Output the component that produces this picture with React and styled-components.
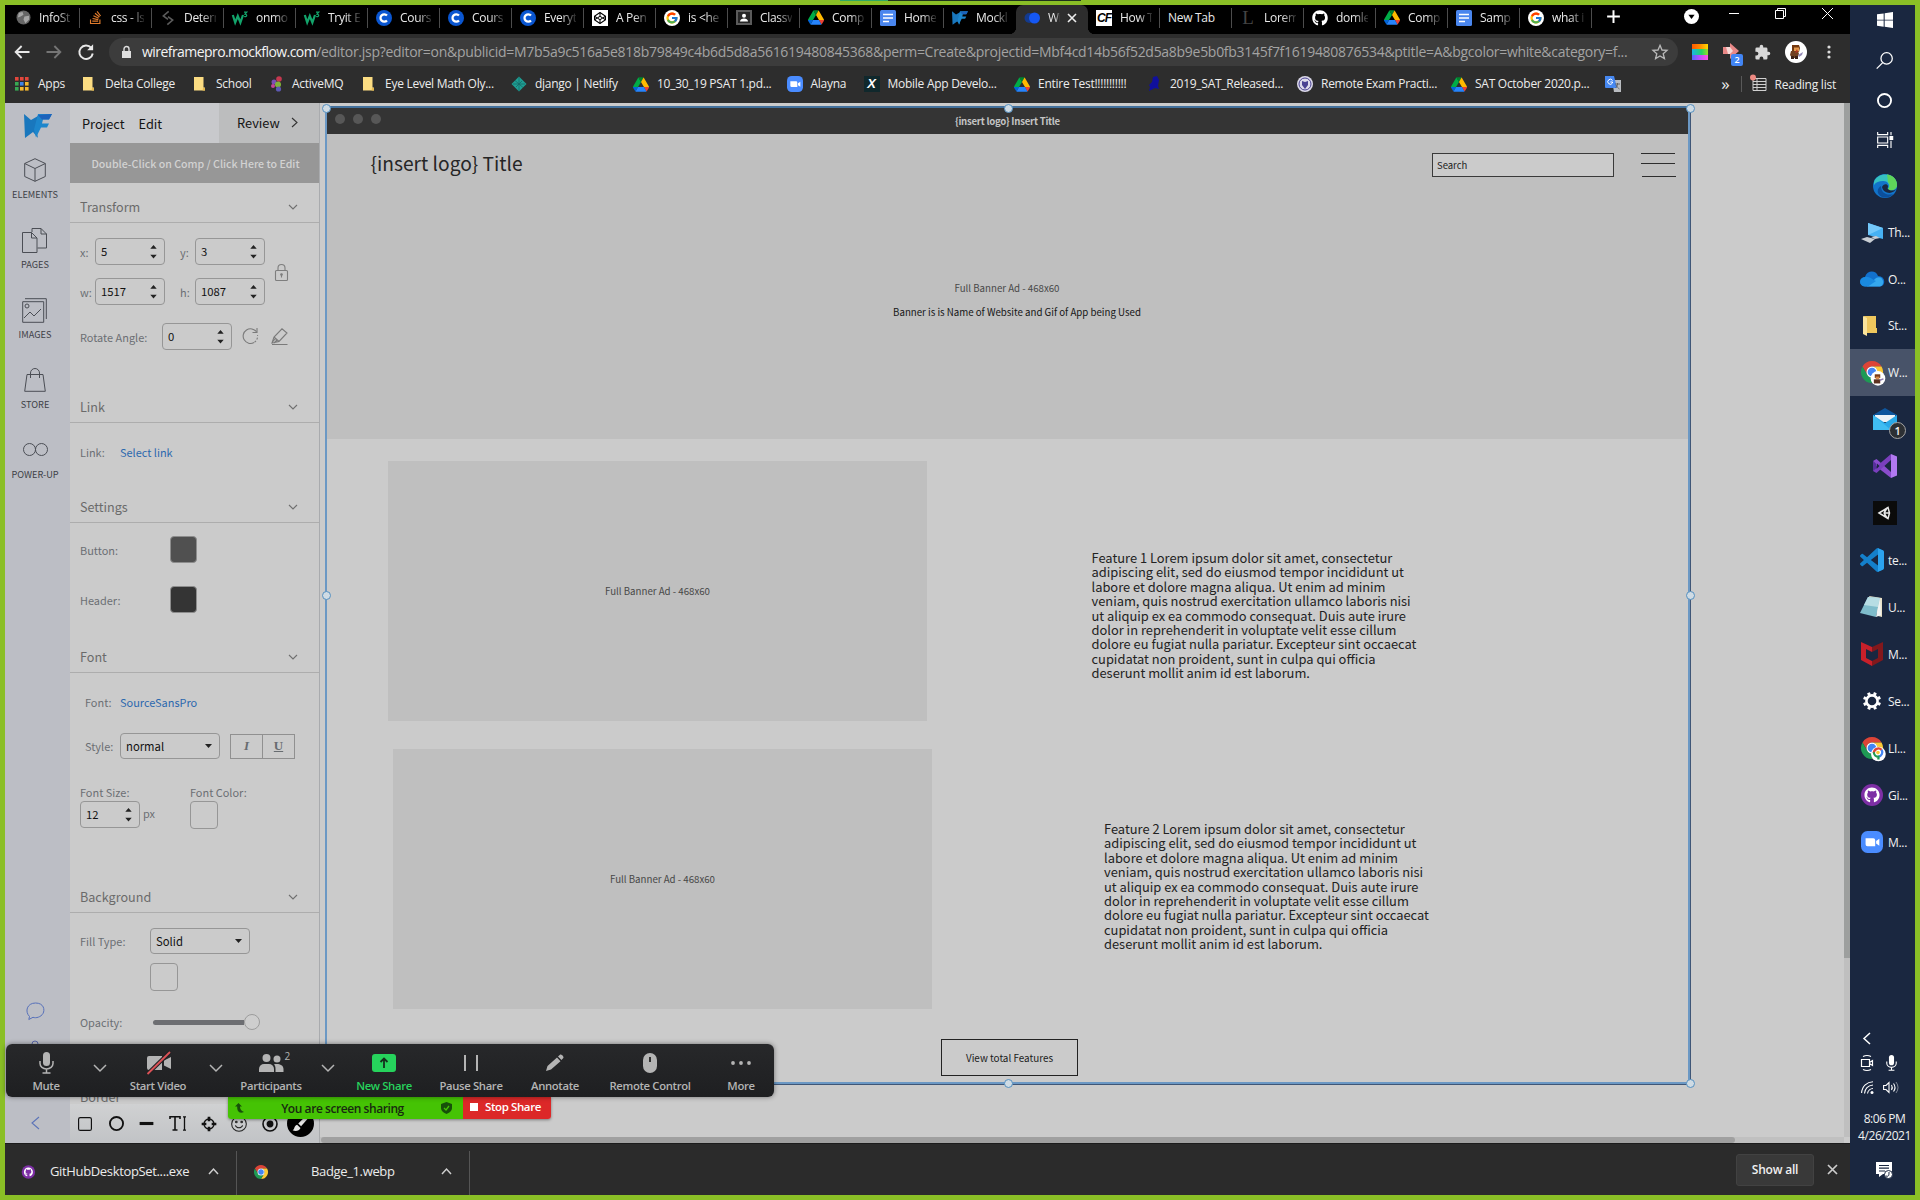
import React from "react";
import styled, { createGlobalStyle, css } from "styled-components";
import { FcGoogle } from "react-icons/fc";
import { FaGithub, FaCodepen, FaStackOverflow } from "react-icons/fa";

const ui = `"Open Sans", "Noto Sans", sans-serif`;
const source = `"Noto Sans CJK SC", "Noto Sans", sans-serif`;

const Global = createGlobalStyle`
  * { box-sizing: border-box; }
  body { margin: 0; background: #8abf26; overflow: hidden; font-family: ${ui}; }
  svg { display: block; flex: none; overflow: visible; }
`;

/* ---------- frame ---------- */
const Screen = styled.div`
  position: relative;
  width: 1920px;
  height: 1200px;
  padding: 5px;
  display: flex;
  background: #8abf26;
`;
const TopMarker = styled.div`
  position: absolute;
  top: 0;
  left: 840px;
  width: 241px;
  height: 1px;
  background: linear-gradient(90deg, #2fa866 48px, #20321c 48px);
`;
const Browser = styled.div`
  width: 1845px;
  height: 1190px;
  display: flex;
  flex-direction: column;
`;

/* ---------- tabs ---------- */
const TabStrip = styled.div`
  height: 29px;
  display: flex;
  background: #000;
  padding-left: 3px;
`;
const Tab = styled.div`
  position: relative;
  width: 72px;
  height: 29px;
  padding: 0 8px 4px 8px;
  display: flex;
  align-items: center;
  gap: 8px;
  ${(p) => p.$line && css`
    background: linear-gradient(#4c4c4c, #4c4c4c) 71px 3px / 1px 20px no-repeat;
  `}
  ${(p) => p.$active && css`
    background: #2d2d2d;
    border-radius: 7px 7px 0 0;
    &::before, &::after {
      content: "";
      position: absolute;
      bottom: 0;
      width: 7px;
      height: 7px;
    }
    &::before { left: -7px; background: radial-gradient(circle at 0 0, transparent 7px, #2d2d2d 7.5px); }
    &::after { right: -7px; background: radial-gradient(circle at 100% 0, transparent 7px, #2d2d2d 7.5px); }
  `}
`;
const TabTitle = styled.span`
  flex: ${(p) => (p.$w ? "none" : 1)};
  width: ${(p) => (p.$w ? p.$w + "px" : "auto")};
  overflow: hidden;
  white-space: nowrap;
  font-size: 12px;
  line-height: 18px;
  letter-spacing: -0.3px;
  color: #e9e9e9;
  ${(p) => !p.$full && css`mask-image: linear-gradient(90deg, #000 55%, rgba(0, 0, 0, 0.15) 100%);`}
`;
const WindowControls = styled.div`
  flex: 1;
  display: flex;
  align-items: flex-start;
  justify-content: space-between;
  padding: 3px 17px 0 13px;
`;
const ControlGroup = styled.div`
  display: flex;
  gap: ${(p) => p.$gap}px;
  align-items: center;
`;

/* ---------- address bar ---------- */
const AddressBar = styled.div`
  height: 36px;
  display: flex;
  align-items: center;
  background: #2d2d2d;
  padding-left: 8px;
`;
const NavButtons = styled.div`
  width: 96px;
  display: flex;
  gap: 14px;
`;
const UrlPill = styled.div`
  width: 1569px;
  height: 28px;
  border-radius: 14px;
  background: #3c3c3c;
  display: flex;
  align-items: center;
  justify-content: space-between;
  padding: 0 10px 0 9px;
`;
const UrlText = styled.div`
  display: flex;
  align-items: center;
  width: 1525px;
  white-space: nowrap;
  font-size: 14px;
  line-height: 20px;
  color: #a3a3a3;
`;
const LockSlot = styled.span`
  flex: none;
  width: 24px;
`;
const Host = styled.span`
  flex: none;
  color: #f4f4f4;
  letter-spacing: -0.56px;
`;
const UrlPath = styled.span`
  flex: none;
  letter-spacing: -0.285px;
`;
const Extensions = styled.div`
  display: flex;
  align-items: center;
  padding-left: 14px;
  gap: 14px;
`;
const Rainbow = styled.div`
  width: 16px;
  height: 16px;
  background:
    linear-gradient(90deg, #ff5a00, #ff8a00, #ffd800) 0 0 / 16px 5px no-repeat,
    linear-gradient(90deg, #19b5e8, #25d366 60%, #9bdb2a) 0 5px / 16px 6px no-repeat,
    linear-gradient(90deg, #4c6bff, #c04cff, #ff56e0) 0 11px / 16px 5px no-repeat;
`;
const ExtArrow = styled.div`
  position: relative;
  width: 18px;
  height: 18px;
`;
const ExtBadge = styled.span`
  position: absolute;
  left: 9px;
  top: 11px;
  width: 12px;
  height: 12px;
  border-radius: 2px;
  background: #4285f4;
  color: #fff;
  font-size: 9px;
  font-weight: 600;
  line-height: 12px;
  text-align: center;
`;

/* ---------- bookmarks ---------- */
const BookmarkBar = styled.div`
  height: 33px;
  display: flex;
  align-items: center;
  background: #2d2d2d;
  padding: 0 14px 5px 9px;
`;
const Bookmark = styled.div`
  width: ${(p) => p.$w}px;
  display: flex;
  align-items: center;
  gap: 8px;
  white-space: nowrap;
  font-size: 12px;
  line-height: 18px;
  letter-spacing: -0.27px;
  color: #ececec;
`;
const BookmarkEnd = styled.div`
  margin-left: auto;
  display: flex;
  align-items: center;
  gap: 8px;
  font-size: 12px;
  letter-spacing: -0.23px;
  color: #ececec;
`;
const EndLine = styled.i`
  width: 1px;
  height: 16px;
  margin: 0 1px 0 3px;
  background: #595959;
`;
const More = styled.span`
  font-size: 17px;
  line-height: 16px;
`;

/* ---------- editor ---------- */
const Editor = styled.div`
  height: 1040px;
  display: flex;
  background: #cbcbcb;
  overflow: hidden;
`;
const Rail = styled.div`
  width: 65px;
  display: flex;
  flex-direction: column;
  align-items: center;
  padding: 11px 5px 0 0;
  background: #bcbec5;
`;
const RailLogo = styled.div`
  height: 44px;
  flex: none;
  padding-left: 5px;
`;
const RailItem = styled.div`
  height: 70px;
  flex: none;
  display: flex;
  flex-direction: column;
  align-items: center;
  justify-content: space-between;
  padding-bottom: 27px;
  font-family: ${source};
  font-size: 9.2px;
  line-height: 14px;
  color: #3e4147;
  white-space: nowrap;
`;
const RailFoot = styled.div`
  margin-top: auto;
  height: 141px;
  flex: none;
  display: flex;
  flex-direction: column;
  justify-content: space-between;
  align-items: center;
  padding-bottom: 14px;
`;
const FootIcons = styled.div`
  display: flex;
  flex-direction: column;
  align-items: center;
  gap: 19px;
`;
const Panel = styled.div`
  width: 250px;
  display: flex;
  flex-direction: column;
  border-right: 1px solid #a9abae;
  font-family: ${source};
`;
const MenuRow = styled.div`
  height: 40px;
  flex: none;
  display: flex;
  background: #c8c9cc;
  font-size: 12.8px;
  color: #141414;
`;
const MenuItems = styled.div`
  width: 149px;
  padding-left: 12px;
  display: flex;
  align-items: center;
  gap: 14px;
`;
const Review = styled.div`
  flex: 1;
  display: flex;
  align-items: center;
  gap: 12px;
  padding: 0 0 1px 18px;
  background: #bcbdbe;
`;
const EditHint = styled.div`
  height: 40px;
  flex: none;
  display: flex;
  align-items: center;
  justify-content: center;
  padding-left: 2px;
  background: #979797;
  color: #d2d2d2;
  font-size: 10.6px;
  font-weight: 500;
  white-space: nowrap;
`;
const Section = styled.section`
  height: ${(p) => p.$h}px;
  flex: none;
  overflow: hidden;
`;
const SectionHead = styled.div`
  height: 40px;
  display: flex;
  align-items: center;
  justify-content: space-between;
  padding: 8px 22px 0 10px;
  border-bottom: 1px solid #adadad;
  color: #6a6a6a;
  font-size: 12.6px;
`;
const Row = styled.div`
  display: flex;
  align-items: ${(p) => p.$align || "center"};
  height: ${(p) => p.$h}px;
  margin-top: ${(p) => p.$mt || 0}px;
  padding-left: ${(p) => p.$pl ?? 10}px;
`;
const Label = styled.span`
  width: ${(p) => (p.$w ? p.$w + "px" : "auto")};
  flex: none;
  font-size: 10.95px;
  line-height: 16px;
  color: ${(p) => (p.$link ? "#2c68ae" : "#6b6f74")};
  white-space: nowrap;
`;
const Field = styled.div`
  width: ${(p) => p.$w}px;
  height: ${(p) => p.$h || 27}px;
  flex: none;
  display: flex;
  align-items: center;
  justify-content: space-between;
  padding: 0 7px 1px 5px;
  margin-right: ${(p) => p.$mr || 0}px;
  border: 1px solid #969696;
  border-radius: 4px;
  font-size: 11.3px;
  color: #111;
`;
const Swatch = styled.div`
  width: ${(p) => p.$s || 28}px;
  height: ${(p) => p.$s || 28}px;
  flex: none;
  border: 1px solid ${(p) => (p.$c ? "#8d8d8d" : "#969696")};
  border-radius: 4px;
  background: ${(p) => p.$c || "transparent"};
`;
const StyleButtons = styled.div`
  display: flex;
  margin-left: 10px;
  width: 65px;
  height: 25px;
  border: 1px solid #909090;
  font-family: "Liberation Serif", serif;
  font-weight: bold;
  font-size: 13px;
  color: #676c70;
`;
const StyleButton = styled.span`
  flex: 1;
  display: flex;
  align-items: center;
  justify-content: center;
  font-style: ${(p) => (p.$italic ? "italic" : "normal")};
  text-decoration: ${(p) => (p.$italic ? "none" : "underline")};
  & + & { border-left: 1px solid #909090; }
`;
const Column = styled.div`
  width: ${(p) => p.$w}px;
  display: flex;
  flex-direction: column;
  gap: 1px;
`;
const PxRow = styled.div`
  display: flex;
  gap: 3px;
  align-items: center;
`;
const PxUnit = styled(Label)`
  padding-bottom: 3px;
`;
const LockRaise = styled.span`
  align-self: flex-start;
  margin-top: -14px;
`;
const EraserSlot = styled.span`
  margin-left: 12px;
`;
const Slider = styled.div`
  display: flex;
  align-items: center;
  height: 16px;
`;
const Track = styled.i`
  width: 91px;
  height: 5px;
  border-radius: 3px 0 0 3px;
  background: #6d6e72;
`;
const Knob = styled.i`
  width: 16px;
  height: 16px;
  border-radius: 50%;
  border: 1px solid #9c9c9c;
  background: #cecece;
`;
const ShapeBar = styled.div`
  height: 39px;
  flex: none;
  display: flex;
  align-items: center;
  background: linear-gradient(#d0d1d2, #c1c3c6);
`;
const ShapeSlot = styled.div`
  width: 30.8px;
  flex: none;
  display: flex;
  justify-content: center;
`;

/* ---------- canvas ---------- */
const Workspace = styled.div`
  flex: 1;
  display: grid;
  grid-template-columns: 1fr 6px;
  grid-template-rows: 1fr 6px;
`;
const VScroll = styled.div`
  background: linear-gradient(#9d9f9e, #9d9f9e) 0 0 / 6px 855px no-repeat, #bfbfbf;
`;
const HScroll = styled.div`
  background: #c0c0c0;
  &::before {
    content: "";
    display: block;
    width: 1414px;
    margin-left: 1px;
    height: 6px;
    border-radius: 3px;
    background: #a0a0a0;
  }
`;
const Canvas = styled.div`
  position: relative;
  font-family: ${source};
`;
const Mock = styled.div`
  position: absolute;
  left: 5px;
  top: 3px;
  width: 1365px;
  height: 978px;
  border: 2px solid #6b98c4;
  border-top-color: #42709c;
  box-shadow: 1px 1px 0 #3f5677;
`;
const MockTitleBar = styled.div`
  height: 26px;
  display: flex;
  align-items: center;
  background: #343434;
`;
const MockDots = styled.div`
  width: 60px;
  display: flex;
  gap: 8px;
  padding: 0 0 4px 8px;
`;
const MockDot = styled.i`
  width: 10px;
  height: 10px;
  border-radius: 50%;
  background: #575757;
`;
const MockTitle = styled.div`
  flex: 1;
  text-align: center;
  padding: 0 60px 1px 0;
  font-size: 9.6px;
  line-height: 14px;
  font-weight: 700;
  letter-spacing: -0.25px;
  color: #c4c4c4;
`;
const MockHero = styled.div`
  height: 305px;
  background: #bfbfbf;
`;
const Placed = styled.div`
  position: absolute;
  left: ${(p) => p.$x}px;
  top: ${(p) => p.$y}px;
  width: ${(p) => (p.$w ? p.$w + "px" : "auto")};
  height: ${(p) => (p.$h ? p.$h + "px" : "auto")};
  white-space: nowrap;
`;
const Banner = styled(Placed)`
  display: flex;
  align-items: center;
  justify-content: center;
  background: #bfbfbf;
  font-size: 9.7px;
  color: #484848;
`;
const Caption = styled(Placed)`
  text-align: center;
  font-size: 9.7px;
  line-height: 14px;
  color: ${(p) => p.$c || "#484848"};
`;
const BrandTitle = styled(Placed)`
  font-size: 19.2px;
  line-height: 28px;
  color: #262626;
`;
const SearchBox = styled(Placed)`
  border: 1.5px solid #3a3a3a;
  background: #cbcbcb;
  padding: 0 0 0 4px;
  font-size: 9.5px;
  line-height: 22px;
  color: #222;
`;
const MenuLine = styled(Placed)`
  background: #2d2d2d;
`;
const Feature = styled(Placed)`
  font-size: 12.88px;
  line-height: 14.4px;
  color: #222;
`;
const ViewButton = styled(Placed)`
  display: flex;
  align-items: center;
  justify-content: center;
  border: 1px solid #222;
  font-size: 9.9px;
  color: #1c1c1c;
`;
const Handle = styled(Placed)`
  width: 9px;
  height: 9px;
  margin: -4.5px 0 0 -4.5px;
  border-radius: 50%;
  border: 1.5px solid #5590c0;
  background: #cfdbe4;
`;

/* ---------- downloads ---------- */
const Downloads = styled.div`
  height: 52px;
  display: flex;
  align-items: center;
  background: #2b2b2b;
  border-top: 1px solid #1c1c1c;
`;
const Download = styled.div`
  width: ${(p) => p.$w}px;
  height: 44px;
  margin-top: 6px;
  padding: 0 18px 2px 17px;
  display: flex;
  align-items: center;
  border-right: 1px solid #555;
  color: #ececec;
  font-size: 13px;
  letter-spacing: -0.35px;
  white-space: nowrap;
`;
const FileName = styled.span`
  flex: 1;
  padding: 0 0 2px ${(p) => p.$pl}px;
`;
const ShowAll = styled.div`
  width: 78px;
  height: 32px;
  margin: 1px 0 0 auto;
  border-radius: 3px;
  border: 1px solid #424242;
  background: #393939;
  color: #f0f0f0;
  font-size: 12px;
  font-weight: 600;
  line-height: 30px;
  text-align: center;
  letter-spacing: -0.2px;
`;
const CloseSlot = styled.div`
  width: 36px;
  display: flex;
  justify-content: center;
`;

/* ---------- meeting controls ---------- */
const Meeting = styled.div`
  position: absolute;
  left: 6px;
  top: 1044px;
  width: 768px;
  height: 53px;
  border-radius: 6px;
  background: linear-gradient(#27282a, #1e1f21);
  box-shadow: 0 0 5px rgba(0, 0, 0, 0.45);
  display: grid;
  grid-template-columns: 80px 28px 88px 28px 82px 32px 80px 94px 74px 116px 66px;
`;
const Action = styled.div`
  display: flex;
  flex-direction: column;
  align-items: center;
  justify-content: space-between;
  padding: 7px 0 3px;
  font-size: 11.3px;
  line-height: 17px;
  font-weight: 600;
  letter-spacing: -0.35px;
  white-space: nowrap;
  color: ${(p) => (p.$green ? "#26d35c" : "#b4b4b4")};
`;
const Caret = styled.div`
  display: flex;
  justify-content: center;
  padding-top: 21px;
`;
const ActionIcon = styled.div`
  height: 23px;
  display: flex;
  align-items: center;
  position: relative;
`;
const Count = styled.span`
  position: absolute;
  left: 26px;
  top: -3px;
  font-size: 10px;
  font-weight: 400;
`;
const ShareBar = styled.div`
  position: absolute;
  left: 228px;
  top: 1097px;
  width: 323px;
  height: 22px;
  display: flex;
  font-size: 12px;
  box-shadow: 0 1px 3px rgba(0, 0, 0, 0.4);
  border-radius: 0 0 3px 3px;
  overflow: hidden;
`;
const Sharing = styled.div`
  width: 235px;
  display: flex;
  align-items: center;
  justify-content: space-between;
  padding: 0 11px 0 7px;
  background: #45c304;
  color: #182a10;
  font-weight: 600;
  letter-spacing: -0.43px;
`;
const StopShare = styled.div`
  flex: 1;
  display: flex;
  align-items: center;
  gap: 7px;
  padding: 0 0 3px 7px;
  background: #dc2828;
  color: #fff;
  font-weight: 600;
  font-size: 11.5px;
  letter-spacing: -0.4px;
  white-space: nowrap;
  i { width: 8px; height: 8px; background: #fff; }
`;

/* ---------- taskbar ---------- */
const Taskbar = styled.div`
  width: 65px;
  height: 1190px;
  display: flex;
  flex-direction: column;
  background: #1a2740;
  color: #f1f1f1;
`;
const SysIcon = styled.div`
  height: 40px;
  display: flex;
  align-items: center;
  justify-content: center;
  padding: 0 0 10px 4px;
`;
const TaskList = styled.div`
  display: flex;
  flex-direction: column;
  margin-top: -2px;
`;
const TaskItem = styled.div`
  position: relative;
  height: 47px;
  &:nth-child(-n + 5) { height: 46.5px; }
  display: flex;
  align-items: center;
  padding-left: ${(p) => (p.$solo ? 23 : p.$inset ? 11 : 10)}px;
  background: ${(p) => (p.$active ? "#485369" : "transparent")};
  font-size: 12px;
  letter-spacing: -0.3px;
  white-space: nowrap;
`;
const TaskText = styled.span`
  position: absolute;
  left: 38px;
`;
const MailCount = styled.span`
  position: absolute;
  left: 39px;
  top: 26px;
  width: 17px;
  height: 17px;
  border-radius: 50%;
  border: 1px solid #a4a4a4;
  background: #2c2f33;
  font-size: 11px;
  font-weight: 600;
  line-height: 15px;
  text-align: center;
`;
const Tray = styled.div`
  margin-top: auto;
  display: grid;
  grid-template-columns: 24px 24px;
  padding-left: 5px;
  height: 74px;
  grid-template-rows: 24px 25px 25px;
  place-items: center;
`;
const Clock = styled.div`
  padding: 10px 0 0 4px;
  height: 62px;
  text-align: center;
  font-size: 12px;
  line-height: 17px;
  letter-spacing: -0.45px;
`;
const Notify = styled.div`
  height: 33px;
  display: flex;
  justify-content: center;
  padding-left: 4px;
`;

/* ---------- drawings ---------- */
const Svg = ({ s = 16, children, v = 24, sw = 1.5, c = "currentColor", fill = "none" }) => (
  <svg width={s} height={s} viewBox={`0 0 ${v} ${v}`} fill={fill} stroke={fill === "none" ? c : "none"} strokeWidth={sw}>
    {children}
  </svg>
);
const Drive = () => (
  <svg width="16" height="15" viewBox="0 0 87.3 78">
    <path d="m6.6 66.85 3.85 6.65c.8 1.4 1.95 2.5 3.3 3.3l13.75-23.8h-27.5c0 1.55.4 3.1 1.2 4.5z" fill="#0066da" />
    <path d="m43.65 25-13.75-23.8c-1.35.8-2.5 1.9-3.3 3.3l-25.4 44a9.06 9.06 0 0 0 -1.2 4.5h27.5z" fill="#00ac47" />
    <path d="m73.55 76.8c1.35-.8 2.5-1.9 3.3-3.3l1.6-2.75 7.65-13.25c.8-1.4 1.2-2.95 1.2-4.5h-27.502l5.852 11.5z" fill="#ea4335" />
    <path d="m43.65 25 13.75-23.8c-1.35-.8-2.9-1.2-4.5-1.2h-18.5c-1.6 0-3.15.45-4.5 1.2z" fill="#00832d" />
    <path d="m59.8 53h-32.3l-13.75 23.8c1.35.8 2.9 1.2 4.5 1.2h50.8c1.6 0 3.15-.45 4.5-1.2z" fill="#2684fc" />
    <path d="m73.4 26.5-12.7-22c-.8-1.4-1.95-2.5-3.3-3.3l-13.75 23.8 16.15 28h27.45c0-1.55-.4-3.1-1.2-4.5z" fill="#ffba00" />
  </svg>
);
const Chrome = ({ s = 22, badge }) => (
  <svg width={s} height={s} viewBox="0 0 48 48">
    <path d="M24 12H44.8A24 24 0 0 0 3.2 12L13.6 30A12 12 0 0 1 24 12Z" fill="#dc4437" />
    <path d="M24 12H44.8A24 24 0 0 1 24 48L34.4 30A12 12 0 0 0 24 12Z" fill="#fcc934" />
    <path d="M13.6 30L3.2 12A24 24 0 0 0 24 48L34.4 30A12 12 0 0 1 13.6 30Z" fill="#1e9a54" />
    <circle cx="24" cy="24" r="12" fill="#fff" />
    <circle cx="24" cy="24" r="9.5" fill="#4285f4" />
    {badge === "face" && (
      <g>
        <circle cx="37" cy="38" r="16" fill="#fff" />
        <path d="M30 29h12v8H30z" fill="#7a3a16" />
        <path d="M32 34h8v6h-8z" fill="#d98b4d" />
        <path d="M28 40h14v9H28z" fill="#5d3220" />
        <path d="M41 42l8-3" stroke="#8c7bb0" strokeWidth="3" />
      </g>
    )}
    {badge === "p" && (
      <g>
        <circle cx="38" cy="37" r="16" fill="#fff" />
        <path d="M28 35A10 10 0 0 1 45 28" fill="none" stroke="#dc4437" strokeWidth="5" />
        <path d="M45 28A10 10 0 0 1 38 43" fill="none" stroke="#4285f4" strokeWidth="5" />
        <path d="M28 33A10 10 0 0 0 38 43V49" fill="none" stroke="#1e9a54" strokeWidth="5" />
        <circle cx="37" cy="34" r="4" fill="#fcc934" />
      </g>
    )}
  </svg>
);
const Coursera = () => (
  <Svg s={16} fill="#0a56d1">
    <circle cx="12" cy="12" r="12" />
    <path d="M16.5 8.2A5.6 5.6 0 1 0 16.5 15.8" fill="none" stroke="#fff" strokeWidth="3.4" />
  </Svg>
);
const W3 = () => (
  <svg width="16" height="14" viewBox="0 0 16 14" fill="none" stroke="#13a46b">
    <path d="M.8 4l2.4 7.5L5.8 5l2.6 6.500L11 4" strokeWidth="2.2" />
    <path d="M12 1.2h2.8L13 3.2c2.4 0 2.4 3-.9 2.3" strokeWidth="1.2" />
  </svg>
);
const MF = ({ w = 16, h = 14 }) => (
  <svg width={w} height={h} viewBox="0 0 28 24">
    <path d="M0 0l7 6 7-4 2 2-4 10 2 10-5-6-8 6z" fill="#1977bd" />
    <path d="M14 0h14l-3 5.500h-6l-1 4h7l-2 4h-6l-5 10-2-8z" fill="#1d86cc" />
    <path d="M14 1l14-1-3 5.500h-7z" fill="#1c62bb" />
  </svg>
);
const Docs = () => (
  <svg width="16" height="16" viewBox="0 0 16 16">
    <rect width="16" height="16" rx="1.5" fill="#4a86ee" />
    <path d="M3 4.500h10M3 8h10M3 11.500h6" stroke="#fff" strokeWidth="1.7" />
  </svg>
);
const Folder = () => (
  <svg width="16" height="16" viewBox="0 0 16 16">
    <path d="M2 1h9.500v10.500h1.500V14.500H2z" fill="#fbdc82" />
    <path d="M11 12l2 0v2.500h-2.500z" fill="#e4b94f" />
  </svg>
);
const Cam = ({ s = 16 }) => (
  <svg width={s} height={s} viewBox="0 0 24 24">
    <rect width="24" height="24" rx="7" fill="#4a8cff" />
    <path d="M5 8h8.500a2 2 0 0 1 2 2v6.500H7a2 2 0 0 1-2-2z M16.500 11l3.500-2.500v7.500l-3.500-2.300z" fill="#fff" />
  </svg>
);
const Globe = () => (
  <svg width="15" height="15" viewBox="0 0 16 16">
    <circle cx="8" cy="8" r="7.500" fill="#666" />
    <path d="M3 3l4-1 1 3-3 2-3 1zM9 7l5-1v4l-4 4-2-4z" fill="#c9c9c9" opacity=".65" />
  </svg>
);
const ClassIcon = () => (
  <svg width="16" height="15" viewBox="0 0 16 15">
    <rect width="16" height="15" fill="#5b5b5b" />
    <rect x="2" y="2" width="12" height="11" fill="#262626" />
    <circle cx="8" cy="5.700" r="2" fill="#fff" />
    <path d="M4 11.500c0-4 8-4 8 0z" fill="#fff" />
  </svg>
);
const GoogleDisc = () => (
  <Svg s={16} fill="#fff"><circle cx="12" cy="12" r="12" /><FcGoogle x={2} y={2} size={20} /></Svg>
);
const CF = styled.span`
  width: 16px;
  height: 16px;
  flex: none;
  background: #fff;
  color: #000;
  font: italic bold 12px/16px "Liberation Sans", sans-serif;
  letter-spacing: -1px;
  text-align: center;
`;
const LSerif = styled.span`
  width: 16px;
  flex: none;
  color: #444;
  font: 19px/18px "Liberation Serif", serif;
  text-align: center;
`;
const XIcon = styled.span`
  width: 16px;
  height: 16px;
  flex: none;
  background: #10282c;
  color: #fff;
  font: italic bold 13px/15px "Liberation Sans", sans-serif;
  text-align: center;
`;
const Avatar = () => (
  <svg width="22" height="22" viewBox="0 0 22 22">
    <circle cx="11" cy="11" r="11" fill="#fff" />
    <path d="M7 4h7l1 3-1 4H7z" fill="#74380f" />
    <path d="M9 6.500h5v4H9z" fill="#e59a4c" />
    <path d="M6 10h7l1 3-2 4H7l-2-3z" fill="#70401f" />
    <path d="M6 15h3v3H6zM10 15h3v3h-3z" fill="#3b2015" />
    <path d="M13 14l5-3-1 3-3 2z" fill="#9489b5" />
    <path d="M12 8l1 3-3 1z" fill="#b3321f" />
  </svg>
);
const Spin = () => (
  <svg width="7" height="15" viewBox="0 0 7 15" fill="#222">
    <path d="M3.500 1L6.700 4.700H.3zM3.500 14.500L6.700 10.800H.3z" />
  </svg>
);
const Drop = () => (
  <svg width="7" height="4" viewBox="0 0 7 4" fill="#222"><path d="M0 0h7L3.500 4z" /></svg>
);
const Chev = ({ w = 7, h = 4, c = "#707070", sw = 1.1, d = "down" }) => {
  const paths = {
    down: `M0 0L${w / 2} ${h}L${w} 0`,
    up: `M0 ${h}L${w / 2} 0L${w} ${h}`,
    right: `M0 0L${w} ${h / 2}L0 ${h}`,
    left: `M${w} 0L0 ${h / 2}L${w} ${h}`,
  };
  return <svg width={w} height={h} fill="none" stroke={c} strokeWidth={sw}><path d={paths[d]} /></svg>;
};

const tabs = [
  [<Globe />, "InfoSt"],
  [<FaStackOverflow size={15} color="#e07b2c" />, "css - ls"],
  [<Svg s={16} c="#5b5b5b" sw={2.4}><path d="M13 2L5 9l7 5M11 22l8-7-7-5" /></Svg>, "Detern"],
  [<W3 />, "onmo"],
  [<W3 />, "Tryit E"],
  [<Coursera />, "Cours"],
  [<Coursera />, "Cours"],
  [<Coursera />, "Everyt"],
  [<Svg s={16} fill="#fff"><path d="M0 0h24v24H0z" /><FaCodepen x={3} y={3} size={18} color="#000" /></Svg>, "A Pen"],
  [<GoogleDisc />, "is <he"],
  [<ClassIcon />, "Classw"],
  [<Drive />, "Comp"],
  [<Docs />, "Home"],
  [<MF />, "Mockl"],
];
const tabsAfter = [
  [<CF>CF</CF>, "How T"],
  [null, "New Tab"],
  [<LSerif>L</LSerif>, "Lorem"],
  [<FaGithub size={16} color="#fff" />, "domle"],
  [<Drive />, "Comp"],
  [<Docs />, "Samp"],
  [<GoogleDisc />, "what i"],
];

const AppsGrid = () => (
  <svg width="16" height="14" viewBox="-1 0 16 14">
    {["#e3473c", "#e3473c", "#e3473c", "#38a853", "#3f84e8", "#f3b72f", "#38a853", "#f3b72f", "#f3b72f"].map((c, i) => (
      <rect key={i} x={(i % 3) * 5} y={Math.floor(i / 3) * 5} width="3.600" height="3.600" fill={c} />
    ))}
  </svg>
);
const bookmarks = [
  [<AppsGrid />, "Apps", 67],
  [<Folder />, "Delta College", 111],
  [<Folder />, "School", 76],
  [<svg width="16" height="16" viewBox="0 0 16 16"><circle cx="11" cy="3" r="2.800" fill="#c5384f" /><circle cx="6" cy="6" r="2.500" fill="#7a4fb5" /><circle cx="10" cy="8.500" r="3" fill="#82b13a" /><circle cx="5" cy="10" r="2" fill="#c5459a" /><circle cx="10.500" cy="13" r="2.600" fill="#5d59b3" /></svg>, "ActiveMQ", 93],
  [<Folder />, "Eye Level Math Oly...", 150],
  [<svg width="16" height="16" viewBox="0 0 16 16"><path d="M8 .5L15.500 8 8 15.500.5 8z" fill="#1f9e93" /><path d="M4 4.500l8 7M11 5L5 11M8 1v14M2 8h12" stroke="#146a67" strokeWidth=".8" /></svg>, "django | Netlify", 122],
  [<Drive />, "10_30_19 PSAT 1.pd...", 153.5],
  [<Cam />, "Alayna", 77],
  [<XIcon>X</XIcon>, "Mobile App Develo...", 150.5],
  [<Drive />, "Entire Test!!!!!!!!!!!", 132],
  [<svg width="16" height="16" viewBox="0 0 16 16"><path d="M7 1l4-1 2 4-1 6 1 3-4-1-6 3 1-4-1-2 3-3z" fill="#10109c" /></svg>, "2019_SAT_Released...", 151],
  [<svg width="16" height="16" viewBox="0 0 16 16"><circle cx="8" cy="8" r="8" fill="#dcdaea" /><circle cx="8" cy="8" r="6" fill="none" stroke="#4a4292" /><path d="M5 5l3 1 3-1v4l-3 4-3-4z" fill="#4a4292" /></svg>, "Remote Exam Practi...", 154],
  [<Drive />, "SAT October 2020.p...", 153.5],
  [<svg width="16" height="16" viewBox="0 0 16 16"><path d="M7 4h9v12H9z" fill="#b9bcc0" /><path d="M0 0h9l3 12H1a1 1 0 0 1-1-1z" fill="#4688f1" /><path d="M7.500 4.500A2.500 2.500 0 1 0 7.500 7V6H5.300" fill="none" stroke="#fff" /><path d="M10 8h5M12.500 7v1c0 2-1 3-2 4M11 9c1 2 2 3 3.500 4" stroke="#555" fill="none" strokeWidth=".8" /></svg>, "", 30],
];

const Mic = ({ c = "#b4b4b4", w = 15, h = 22 }) => (
  <svg width={w} height={h} viewBox="0 0 15 22" fill="none" stroke={c} strokeWidth="1.500">
    <rect x="4" y="0" width="7" height="14" rx="3.500" fill={c} stroke="none" />
    <path d="M1 9v2.500a6.500 5.500 0 0 0 13 0V9M7.500 17v4M3.500 21h8" />
  </svg>
);

const lorem = [
  "adipiscing elit, sed do eiusmod tempor incididunt ut",
  "labore et dolore magna aliqua. Ut enim ad minim",
  "veniam, quis nostrud exercitation ullamco laboris nisi",
  "ut aliquip ex ea commodo consequat. Duis aute irure",
  "dolor in reprehenderit in voluptate velit esse cillum",
  "dolore eu fugiat nulla pariatur. Excepteur sint occaecat",
  "cupidatat non proident, sunt in culpa qui officia",
  "deserunt mollit anim id est laborum.",
];
const FeatureText = ({ n, x, y }) => (
  <Feature $x={x} $y={y}>
    {[`Feature ${n} Lorem ipsum dolor sit amet, consectetur`, ...lorem].map((l) => <div key={l}>{l}</div>)}
  </Feature>
);

const Head = ({ children }) => (
  <SectionHead><span>{children}</span><Chev w={8} h={4} /></SectionHead>
);

function Inspector() {
  return (
    <Panel>
      <MenuRow>
        <MenuItems><span>Project</span><span>Edit</span></MenuItems>
        <Review><span>Review</span><Chev d="right" w={5} h={9} c="#333" /></Review>
      </MenuRow>
      <EditHint>Double-Click on Comp / Click Here to Edit</EditHint>
      <Section $h={200}>
        <Head>Transform</Head>
        <Row $h={27} $mt={15}>
          <Label $w={15}>x:</Label><Field $w={70} $mr={15}>5<Spin /></Field>
          <Label $w={15}>y:</Label><Field $w={70}>3<Spin /></Field>
        </Row>
        <Row $h={27} $mt={13}>
          <Label $w={15}>w:</Label><Field $w={70} $mr={15}>1517<Spin /></Field>
          <Label $w={15}>h:</Label><Field $w={70} $mr={10}>1087<Spin /></Field>
          <LockRaise>
            <svg width="13" height="17" viewBox="0 0 13 17" fill="none" stroke="#7e7e7e" strokeWidth="1.100">
              <rect x=".5" y="6.500" width="12" height="10" rx="1" /><path d="M3 6.500V4a3.500 3.500 0 0 1 7 0v2.500M6.500 10v3.500" />
              <circle cx="6.500" cy="10.500" r=".8" fill="#7e7e7e" />
            </svg>
          </LockRaise>
        </Row>
        <Row $h={27} $mt={18}>
          <Label $w={82}>Rotate Angle:</Label><Field $w={70} $mr={10}>0<Spin /></Field>
          <svg width="17" height="17" viewBox="0 0 17 17" fill="none" stroke="#7a7a7a" strokeWidth="1.100">
            <path d="M14.500 4A7.300 7.300 0 1 0 12 14.500" /><path d="M12.500 14.200a7.300 7.300 0 0 0 3-7" strokeDasharray="2 1.500" /><path d="M15 0v4.500h-4.500" />
          </svg>
          <EraserSlot>
            <svg width="17" height="17" viewBox="0 0 17 17" fill="none" stroke="#7a7a7a" strokeWidth="1.100">
              <path d="M1 16.500h15.500M1 15l2-6 8-8.200 5 4.200-8 8.500zM3 9l5 4.500M1.500 14l3-3.500M3 15l3-3" />
            </svg>
          </EraserSlot>
        </Row>
      </Section>
      <Section $h={100}>
        <Head>Link</Head>
        <Row $h={20} $mt={19}><Label $w={40}>Link:</Label><Label $link>Select link</Label></Row>
      </Section>
      <Section $h={150}>
        <Head>Settings</Head>
        <Row $h={27} $mt={13}><Label $w={90}>Button:</Label><Swatch $s={27} $c="#505050" /></Row>
        <Row $h={27} $mt={23}><Label $w={90}>Header:</Label><Swatch $s={27} $c="#343434" /></Row>
      </Section>
      <Section $h={240}>
        <Head>Font</Head>
        <Row $h={20} $mt={19} $pl={15}><Label $w={35}>Font:</Label><Label $link>SourceSansPro</Label></Row>
        <Row $h={26} $mt={21} $pl={15}>
          <Label $w={35}>Style:</Label><Field $w={100} $h={26}>normal<Drop /></Field>
          <StyleButtons><StyleButton $italic>I</StyleButton><StyleButton>U</StyleButton></StyleButtons>
        </Row>
        <Row $h={44} $mt={25} $align="flex-start">
          <Column $w={110}>
            <Label>Font Size:</Label>
            <PxRow><Field $w={60}>12<Spin /></Field><PxUnit>px</PxUnit></PxRow>
          </Column>
          <Column><Label>Font Color:</Label><Swatch /></Column>
        </Row>
      </Section>
      <Section $h={200}>
        <Head>Background</Head>
        <Row $h={26} $mt={15}><Label $w={70}>Fill Type:</Label><Field $w={100} $h={26}>Solid<Drop /></Field></Row>
        <Row $h={28} $mt={9} $pl={80}><Swatch /></Row>
        <Row $h={20} $mt={21}><Label $w={73}>Opacity:</Label><Slider><Track /><Knob /></Slider></Row>
      </Section>
      <Section $h={31}>
        <Head>Border</Head>
      </Section>
      <ShapeBar>
        <ShapeSlot><Svg s={14} c="#111" sw={2}><rect x="1" y="1" width="22" height="22" rx="3" /></Svg></ShapeSlot>
        <ShapeSlot><Svg s={15} c="#111" sw={3}><circle cx="12" cy="12" r="10.500" /></Svg></ShapeSlot>
        <ShapeSlot><Svg s={15} c="#111" sw={5}><path d="M1 12h22" /></Svg></ShapeSlot>
        <ShapeSlot>
          <svg width="18" height="15" viewBox="0 0 18 15" fill="none" stroke="#111">
            <path d="M1 3V.8h10V3M6 .8v13M3.500 14h5" strokeWidth="1.600" /><path d="M15.500 1v13M14 .8h3M14 14.200h3" strokeWidth="1.300" />
          </svg>
        </ShapeSlot>
        <ShapeSlot><Svg s={16} c="#111" sw={2}><circle cx="12" cy="12" r="7.500" /><path d="M12 1v7M12 16v7M1 12h7M16 12h7" strokeWidth={4} /></Svg></ShapeSlot>
        <ShapeSlot><Svg s={16} c="#222" sw={1.6}><circle cx="12" cy="12" r="11" /><path d="M6.500 14c2 5 9 5 11 0" /><circle cx="8" cy="9" r="1.200" /><circle cx="16" cy="9" r="1.200" /></Svg></ShapeSlot>
        <ShapeSlot><Svg s={16} c="#111" sw={2.400}><circle cx="12" cy="12" r="10.500" /><circle cx="12" cy="12" r="4" fill="#111" /></Svg></ShapeSlot>
        <ShapeSlot>
          <Svg s={27} fill="#000"><circle cx="12" cy="12" r="12" /><path d="M10 12l7-7 2 2-6.500 7.500zM9 13l3 3c-1 3-5 3-7 2 2-1 1-4 4-5z" fill="#e4e4e4" /></Svg>
        </ShapeSlot>
      </ShapeBar>
    </Panel>
  );
}

const railItems = [
  ["ELEMENTS", <svg width="22" height="24" viewBox="0 0 22 24" fill="none" stroke="#4b4e55"><path d="M11 .7l10.300 4.800v13L11 23.300.7 18.500v-13zM.7 5.500L11 10.500l10.300-5M11 10.500v12.800" /></svg>],
  ["PAGES", <svg width="25" height="25" viewBox="0 0 25 25" fill="none" stroke="#4b4e55"><path d="M10 4V.5h9l5.500 5.500v14h-9M19 .5V6h5.500M.5 4.500h9l5.500 5.500v14.500H.5zM9.500 4.500V10H15" /></svg>],
  ["IMAGES", <svg width="25" height="25" viewBox="0 0 25 25" fill="none" stroke="#4b4e55"><path d="M3 .7h21.300V21M.7 3.700h21v20.600h-21z" /><circle cx="5" cy="8" r="2" /><path d="M2 20l6-6 4 4 7-7" /></svg>],
  ["STORE", <svg width="22" height="24" viewBox="0 0 22 24" fill="none" stroke="#4b4e55"><path d="M3 6.500h16l2.300 16.800H.7zM6.500 10V5a4.500 4.500 0 0 1 9 0v5" /></svg>],
  ["POWER-UP", <svg width="25" height="24" viewBox="0 0 25 24" fill="none" stroke="#4b4e55"><circle cx="6.500" cy="11.500" r="6" /><circle cx="18.500" cy="11.500" r="6" /></svg>],
];

function EditorArea() {
  return (
    <Editor>
      <Rail>
        <RailLogo><MF w={28} h={24} /></RailLogo>
        {railItems.map(([t, icon]) => (
          <RailItem key={t}>{icon}<span>{t}</span></RailItem>
        ))}
        <RailFoot>
          <FootIcons>
            <svg width="19" height="19" viewBox="0 0 19 19" fill="none" stroke="#5670ba"><path d="M3.500 14.500C-1.500 9.500 1 1 9.500 1S19 8 17 11.500s-7 5-10 3.800L2.800 17.500z" /></svg>
            <svg width="14" height="14" viewBox="0 0 14 14" fill="none" stroke="#5a68ac"><circle cx="7" cy="4" r="3" /><path d="M1 14c0-7 12-7 12 0" /></svg>
          </FootIcons>
          <Chev d="left" w={7} h={12} c="#5c74b8" />
        </RailFoot>
      </Rail>
      <Inspector />
      <Workspace>
        <Canvas>
          <Mock>
            <MockTitleBar>
              <MockDots><MockDot /><MockDot /><MockDot /></MockDots>
              <MockTitle>{"{insert logo} Insert Title"}</MockTitle>
            </MockTitleBar>
            <MockHero />
          </Mock>
          <BrandTitle $x={50.5} $y={46}>{"{insert logo} Title"}</BrandTitle>
          <SearchBox $x={1112} $y={50} $w={182} $h={24}>Search</SearchBox>
          <MenuLine $x={1321} $y={50} $w={34} $h={1} />
          <MenuLine $x={1321} $y={60} $w={34} $h={1} />
          <MenuLine $x={1322} $y={73} $w={34} $h={1} />
          <Caption $x={587} $y={178} $w={200}>Full Banner Ad - 468x60</Caption>
          <Caption $x={547} $y={202} $w={300} $c="#161616">Banner is is Name of Website and Gif of App being Used</Caption>
          <Banner $x={68} $y={358} $w={539} $h={260}>Full Banner Ad - 468x60</Banner>
          <Banner $x={73} $y={646} $w={539} $h={260}>Full Banner Ad - 468x60</Banner>
          <FeatureText n={1} x={771.5} y={448} />
          <FeatureText n={2} x={784} y={719} />
          <ViewButton $x={621} $y={936} $w={137} $h={37}>View total Features</ViewButton>
          {[[6, 5], [688, 5], [1370, 5], [6, 492], [1370, 492], [6, 980], [688, 980], [1370, 980]].map(([x, y]) => (
            <Handle key={x + "-" + y} $x={x} $y={y} />
          ))}
        </Canvas>
        <VScroll />
        <HScroll />
      </Workspace>
    </Editor>
  );
}

const taskItems = [
  { solo: true, icon: (
    <svg width="24" height="24" viewBox="0 0 24 24">
      <circle cx="12" cy="12" r="12" fill="#1273c9" />
      <path d="M1 8C4-3 24-2 24 11c0 5-7 7-9 4 2-3 1-8-5-8-4 0-7 1-9 4z" fill="#36c2c0" />
      <path d="M14 .3C22 2 24 7 24 11c0 5-7 7-9 4 2-2 2-5 0-7z" fill="#5fd45a" />
      <path d="M8 12c0 7 6 10 12 8-3 4-8 4-11 3-6-3-5-9-1-11z" fill="#0c4f9c" />
      <path d="M9 13c1-3 5-4 6-1 0 2-1 2 0 3 2 2 6 2 8 0-2 5-12 6-14-2z" fill="#1a2740" />
    </svg>) },
  { t: "Th...", icon: (
    <svg width="24" height="22" viewBox="0 0 24 22"><path d="M8 1l15 5v11L8 13z" fill="#47b1f3" /><path d="M8 1l15 5-15 7z" fill="#74c8fa" /><path d="M1 17l6-2 8 2-5 4zM11 15l5-1 4 2-5 1z" fill="#c9ced4" /></svg>) },
  { t: "O...", icon: (
    <svg width="24" height="16" viewBox="0 0 24 16"><path d="M5 6C7-1 16-1 18 5c8 0 8 10 2 10.500H5C-2 15-1 6 5 6z" fill="#1271cd" /><path d="M7 15.500L16 7c7-4 10 7 4 8.500z" fill="#35a8ef" /><path d="M5 6c4-1 8 3 11 4l-8 5.500H5C-2 15-1 6 5 6z" fill="#1a8ae0" /></svg>) },
  { t: "St...", icon: (
    <svg width="24" height="20" viewBox="0 0 24 20"><path d="M4 0h12v12h1v5H6z" fill="#efc75d" /><path d="M3 0l4 2v18l-4-2z" fill="#fbe49c" /></svg>) },
  { t: "W...", active: true, inset: true, icon: <Chrome badge="face" /> },
  { solo: true, mail: true, icon: (
    <svg width="24" height="22" viewBox="0 0 24 22"><path d="M0 7l12-7 12 7v5H0z" fill="#0f569d" /><path d="M2 7h20v7H2z" fill="#eef3f7" /><path d="M0 7l12 8 12-8v15H0z" fill="#29a8e8" /><path d="M0 7l18 15H0z" fill="#40bdf2" /></svg>) },
  { solo: true, icon: (
    <svg width="24" height="24" viewBox="0 0 24 24"><path d="M0 7l3.500-2L18 18v6L4 13z" fill="#8a4ccc" /><path d="M0 7v10l3.500 2L18 6V0L4 12v3z" fill="#7a3fbd" /><path d="M0 7l3.500 3v4L0 17z" fill="#57309a" /><path d="M18 0l6 2.500v19L18 24z" fill="#b179f1" /><path d="M4 9.500l2.500 2.500L4 14.500zM18 7.500v9L12.500 12z" fill="#1a2740" /></svg>) },
  { solo: true, icon: (
    <svg width="24" height="24" viewBox="0 0 24 24"><rect width="24" height="24" fill="#0b0b0b" /><path d="M6 12l9-5.500 1.500 5.500-1.500 5.500zM11 12h5M11 12l3-5M11 12l3 5" fill="none" stroke="#e8e8e8" strokeWidth="1.500" /></svg>) },
  { t: "te...", icon: (
    <svg width="24" height="24" viewBox="0 0 24 24"><path d="M23.150 2.587L18.210.21a1.494 1.494 0 0 0-1.705.29l-9.460 8.630-4.120-3.128a.999.999 0 0 0-1.276.057L.327 7.261A1 1 0 0 0 .326 8.740L3.899 12 .326 15.260a1 1 0 0 0 .001 1.479L1.650 17.940a.999.999 0 0 0 1.276.057l4.120-3.128 9.460 8.630a1.492 1.492 0 0 0 1.704.290l4.942-2.377A1.500 1.500 0 0 0 24 20.060V3.939a1.500 1.500 0 0 0-.850-1.352zm-5.146 14.861L10.826 12l7.178-5.448v10.896z" fill="#1480cb" /><path d="M18 .2l5.200 2.400.8 1.400v16l-.8 1.400L18 23.800z" fill="#2ba3ef" /></svg>) },
  { t: "U...", icon: (
    <svg width="24" height="22" viewBox="0 0 24 22"><path d="M9 0l13 2v19l-4-1z" fill="#e8e0c8" /><path d="M8 1l12 1-4 19-16-4z" fill="#7fbccb" /><path d="M8 1l12 1-2 9-14-2z" fill="#b7dde4" /><path d="M20 2l1 17-5 2z" fill="#f1f3f3" /></svg>) },
  { t: "M...", icon: (
    <svg width="24" height="24" viewBox="0 0 24 24"><path d="M1 0l11 5v5L6 7v9l6 3v5L1 18z" fill="#c8202a" /><path d="M23 0L12 5v5l6-3v9l-6 3v5l11-6z" fill="#82181c" /></svg>) },
  { t: "Se...", icon: (
    <svg width="24" height="18" viewBox="0 0 24 18" fill="none" stroke="#fff"><circle cx="12" cy="9" r="5.600" strokeWidth="2.600" />{[0, 45, 90, 135, 180, 225, 270, 315].map((a) => <path key={a} d="M12 0v2.600" strokeWidth="3" transform={`rotate(${a + 22} 12 9)`} />)}</svg>) },
  { t: "LI...", inset: true, icon: <Chrome badge="p" /> },
  { t: "Gi...", inset: true, icon: <Svg s={22} fill="#7d2fa5"><circle cx="12" cy="12" r="12" /><FaGithub x={3.5} y={3.5} size={17} color="#fff" /></Svg> },
  { t: "M...", inset: true, icon: <Cam s={22} /> },
];

function TaskbarColumn() {
  return (
    <Taskbar>
      <SysIcon><Svg s={16} fill="#fff"><path d="M0 3.500l10-1.400v9.400H0zM11.500 1.900L24 0v11.500H11.500zM0 12.700h10v9.400L0 20.700zM11.500 12.700H24V24l-12.500-1.800z" /></Svg></SysIcon>
      <SysIcon><Svg s={17} sw={1.800} c="#fff"><circle cx="15" cy="9" r="8" /><path d="M9.500 15L1 23.500" /></Svg></SysIcon>
      <SysIcon><Svg s={15} sw={3} c="#fff"><circle cx="12" cy="12" r="10.500" /></Svg></SysIcon>
      <SysIcon><Svg s={16} sw={1.700} c="#fff"><path d="M1 0v4h15V0M1 7.500h15v9H1zM1 24v-4h15v4M21 0v5M21 13v11" /><path d="M19.500 7h4v4h-4z" fill="#fff" /></Svg></SysIcon>
      <TaskList>
        {taskItems.map((it, i) => (
          <TaskItem key={i} $solo={it.solo} $active={it.active} $inset={it.inset}>
            {it.icon}
            {it.t && <TaskText>{it.t}</TaskText>}
            {it.mail && <MailCount>1</MailCount>}
          </TaskItem>
        ))}
      </TaskList>
      <Tray>
        <Chev d="left" w={6} h={11} c="#fff" sw={1.5} /><span />
        <svg width="12" height="16" viewBox="0 0 12 16" fill="none" stroke="#fff"><path d="M2 1.500q4-2 8 0M2 14.500q4 2 8 0M.5 4.500h8v7h-8zM8.500 7.500l3-2v5l-3-2" strokeWidth="1.200" /></svg>
        <Mic c="#fff" w={11} h={16} />
        <svg width="13" height="13" viewBox="0 0 13 13" fill="none" stroke="#fff"><path d="M.6 12C1 5 6 1 12 .7M3.500 12.500C4 7 8 4.500 12 4M6.500 12.500c.5-3 3-5 5.500-5" strokeWidth="1.100" /><circle cx="11" cy="11.500" r="1.500" fill="#fff" stroke="none" /></svg>
        <svg width="16" height="13" viewBox="0 0 16 13" fill="none" stroke="#fff"><path d="M.6 4.500H3L6 1.500v10L3 8.500H.6zM8.500 4q1.500 2.500 0 5M10.500 2.500q3 4 0 8" strokeWidth="1.100" /><path d="M13 1q4 5.500 0 11" opacity=".45" /></svg>
      </Tray>
      <Clock>8:06 PM<br />4/26/2021</Clock>
      <Notify>
        <svg width="17" height="17" viewBox="0 0 17 17"><path d="M0 0h16v12H7l-4 3v-3H0z" fill="#fff" /><path d="M3 3.500h10M3 6.200h10M3 9h6" stroke="#1a2740" strokeWidth="1.200" /><circle cx="12.500" cy="12.500" r="4" fill="#fff" stroke="#1a2740" /><path d="M10 14c3 1 3-1 3-4" stroke="#1a2740" fill="none" /></svg>
      </Notify>
    </Taskbar>
  );
}

function MeetingControls() {
  const grey = "#b4b4b4";
  return (
    <>
      <ShareBar>
        <Sharing>
          <svg width="9" height="10" viewBox="0 0 9 10"><path d="M3.500 0L7 3.500H5C5 6 6 8 9 9 4 11 2 8 2.200 3.500H0z" fill="#17500a" /></svg>
          <span>You are screen sharing</span>
          <svg width="11" height="12" viewBox="0 0 11 12"><path d="M5.500 0L11 2v4c0 3-3 5-5.500 6C3 11 0 9 0 6V2z" fill="#17500a" /><path d="M3 6l2 2 3-4" stroke="#45c304" fill="none" strokeWidth="1.300" /></svg>
        </Sharing>
        <StopShare><i />Stop Share</StopShare>
      </ShareBar>
      <Meeting>
        <Action><ActionIcon><Mic /></ActionIcon>Mute</Action>
        <Caret><Chev w={12} h={6} c={grey} sw={1.5} /></Caret>
        <Action>
          <ActionIcon>
            <svg width="25" height="22" viewBox="0 0 25 22"><path d="M1 6a2 2 0 0 1 2-2h13v14H3a2 2 0 0 1-2-2zM18 8.500L25 5v12l-7-3.500z" fill={grey} /><path d="M1.500 22L24 0" stroke="#212224" strokeWidth="4" /><path d="M1.500 22L24 0" stroke="#dc5257" strokeWidth="1.800" /></svg>
          </ActionIcon>
          Start Video
        </Action>
        <Caret><Chev w={12} h={6} c={grey} sw={1.5} /></Caret>
        <Action>
          <ActionIcon>
            <svg width="25" height="18" viewBox="0 0 25 18" fill={grey}><circle cx="7.500" cy="4" r="4" /><path d="M0 18v-3a5 5 0 0 1 5-5h5a5 5 0 0 1 5 5v3z" /><circle cx="18" cy="5" r="3.500" /><path d="M16.500 18v-3c0-2-.5-3.500-1.500-4.700 4-1 9.500 0 9.500 4.700v3z" /></svg>
            <Count>2</Count>
          </ActionIcon>
          Participants
        </Action>
        <Caret><Chev w={12} h={6} c={grey} sw={1.5} /></Caret>
        <Action $green>
          <ActionIcon>
            <svg width="24" height="18" viewBox="0 0 24 18"><rect width="24" height="18" rx="3" fill="#26d35c" /><path d="M12 14V5M8.500 8L12 4.500 15.500 8" fill="none" stroke="#15301d" strokeWidth="1.800" /></svg>
          </ActionIcon>
          New Share
        </Action>
        <Action><ActionIcon><svg width="14" height="16"><path d="M1 0v16M13 0v16" stroke={grey} strokeWidth="2" /></svg></ActionIcon>Pause Share</Action>
        <Action><ActionIcon><svg width="18" height="17" viewBox="0 0 18 17" fill={grey}><path d="M0 17l1.500-5L11 3.500l3.500 3.700L5 15.500zM12 2.600l2-1.800c1-1 4.500 2 3.300 3.300l-1.800 2z" /></svg></ActionIcon>Annotate</Action>
        <Action><ActionIcon><svg width="14" height="20" viewBox="0 0 14 20"><rect width="14" height="20" rx="7" fill={grey} /><path d="M7 4v5" stroke="#222" strokeWidth="1.800" /></svg></ActionIcon>Remote Control</Action>
        <Action><ActionIcon><svg width="20" height="4" viewBox="0 0 20 4" fill={grey}><circle cx="2" cy="2" r="1.900" /><circle cx="10" cy="2" r="1.900" /><circle cx="18" cy="2" r="1.900" /></svg></ActionIcon>More</Action>
      </Meeting>
    </>
  );
}

export default function App() {
  return (
    <Screen>
      <Global />
      <TopMarker />
      <Browser>
        <TabStrip>
          {tabs.map(([icon, t], i) => (
            <Tab key={i} $line={i < 13}>{icon}<TabTitle>{t}</TabTitle></Tab>
          ))}
          <Tab $active>
            <svg width="16" height="12" viewBox="0 0 16 12"><circle cx="5.500" cy="6" r="5" fill="#143a8c" /><circle cx="10.500" cy="6" r="5.500" fill="#1557f2" /></svg>
            <TabTitle $w={12}>Wi</TabTitle>
            <svg width="8" height="8" stroke="#eee" strokeWidth="1.600"><path d="M0 0l8 8M8 0L0 8" /></svg>
          </Tab>
          {tabsAfter.map(([icon, t], i) => (
            <Tab key={i} $line>{icon}<TabTitle $full={!icon}>{t}</TabTitle></Tab>
          ))}
          <WindowControls>
            <ControlGroup $gap={62}>
              <Svg s={17} v={12} c="#fff" sw={1.400}><path d="M6 1.500v9M1.500 6h9" /></Svg>
              <Svg s={15} fill="#fff"><circle cx="12" cy="12" r="12" /><path d="M7 9h10l-5 7z" fill="#000" /></Svg>
            </ControlGroup>
            <ControlGroup $gap={36}>
              <svg width="10" height="11" stroke="#fff"><path d="M0 5.500h10" /></svg>
              <svg width="11" height="11" fill="none" stroke="#fff"><path d="M.5 2.500h8v8h-8zM2.500 2V.5h8v8H9" /></svg>
              <svg width="11" height="11" stroke="#fff"><path d="M0 0l11 11M11 0L0 11" /></svg>
            </ControlGroup>
          </WindowControls>
        </TabStrip>
        <AddressBar>
          <NavButtons>
            <Svg s={18} c="#e8e8e8" sw={2.400}><path d="M22 12H4M11.500 4L3.500 12l8 8" /></Svg>
            <Svg s={18} c="#757575" sw={2.400}><path d="M2 12h18M12.500 4l8 8-8 8" /></Svg>
            <Svg s={18} c="#e8e8e8" sw={2.600}><path d="M19 6.500A9 9 0 1 0 21 14" /><path d="M21.500 1.500v8h-8z" fill="#e8e8e8" stroke="none" /></Svg>
          </NavButtons>
          <UrlPill>
            <UrlText>
              <LockSlot><svg width="16" height="12" viewBox="0 0 16 12"><path d="M4 5h9v7H4z" fill="#dedede" /><path d="M6 5V3a2.500 2.500 0 0 1 5 0v2" stroke="#dedede" strokeWidth="1.400" fill="none" /></svg></LockSlot>
              <Host>wireframepro.mockflow.com</Host>
              <UrlPath>/editor.jsp?editor=on&amp;publicid=M7b5a9c516a5e818b79849c4b6d5d8a561619480845368&amp;perm=Create&amp;projectid=Mbf4cd14b56f52d5a8b9e5b0fb3145f7f1619480876534&amp;ptitle=A&amp;bgcolor=white&amp;category=f...</UrlPath>
            </UrlText>
            <Svg s={16} c="#b8b8b8" sw={2}><path d="M12 2l3 7 7.500.6-5.700 5 1.800 7.400L12 18l-6.600 4 1.800-7.400-5.700-5L9 9z" /></Svg>
          </UrlPill>
          <Extensions>
            <Rainbow />
            <ExtArrow>
              <svg width="18" height="16" viewBox="0 0 18 16"><path d="M1 4h7V0l9 8-9 8v-5H1z" fill="#e98887" /><path d="M4 4h4l3 4-3 3H6z" fill="#f5d9d7" /></svg>
              <ExtBadge>2</ExtBadge>
            </ExtArrow>
            <Svg s={17} fill="#d8d8d8"><path d="M20.500 11H19V7a2 2 0 0 0-2-2h-4V3.500a2.500 2.500 0 0 0-5 0V5H4a2 2 0 0 0-2 2v3.800h1.500a2.700 2.700 0 0 1 0 5.400H2V20a2 2 0 0 0 2 2h3.800v-1.500a2.700 2.700 0 0 1 5.400 0V22H17a2 2 0 0 0 2-2v-4h1.500a2.500 2.500 0 0 0 0-5z" /></Svg>
            <Avatar />
            <svg width="14" height="14" fill="#dcdcdc"><circle cx="8" cy="2" r="1.600" /><circle cx="8" cy="7" r="1.600" /><circle cx="8" cy="12" r="1.600" /></svg>
          </Extensions>
        </AddressBar>
        <BookmarkBar>
          {bookmarks.map(([icon, t, w], i) => (
            <Bookmark key={i} $w={w}>{icon}{t && <span>{t}</span>}</Bookmark>
          ))}
          <BookmarkEnd>
            <More>»</More>
            <EndLine />
            <svg width="16" height="16" viewBox="0 0 16 16" fill="none" stroke="#d0d0d0"><path d="M2 2.500h13v12H2zM6 2.500v12M6 5.500h9M6 8.500h9M6 11.500h9M2 5.500h4M2 8.500h4M2 11.500h4" /><circle cx="2" cy="1.500" r="3" fill="#ee8a82" stroke="none" /></svg>
            <span>Reading list</span>
          </BookmarkEnd>
        </BookmarkBar>
        <EditorArea />
        <Downloads>
          <Download $w={232}>
            <Svg s={14} fill="#7d2fa5"><circle cx="11" cy="12" r="11.500" /><FaGithub x={3} y={4} size={16} color="#fff" /></Svg>
            <FileName $pl={14}>GitHubDesktopSet....exe</FileName>
            <Chev d="up" w={9} h={5} c="#cfcfcf" sw={1.500} />
          </Download>
          <Download $w={233}>
            <Chrome s={14} />
            <FileName $pl={43}>Badge_1.webp</FileName>
            <Chev d="up" w={9} h={5} c="#cfcfcf" sw={1.500} />
          </Download>
          <ShowAll>Show all</ShowAll>
          <CloseSlot><svg width="9" height="9" stroke="#ccc" strokeWidth="1.700"><path d="M0 0l9 9M9 0L0 9" /></svg></CloseSlot>
        </Downloads>
      </Browser>
      <TaskbarColumn />
      <MeetingControls />
    </Screen>
  );
}
